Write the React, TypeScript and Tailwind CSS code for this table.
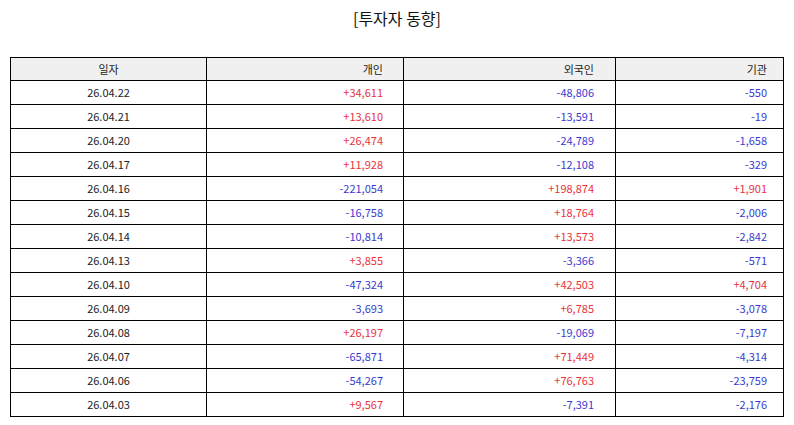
import React from "react";

const rows: [string, string, string, string][] = [
  ["26.04.22", "+34,611", "-48,806", "-550"],
  ["26.04.21", "+13,610", "-13,591", "-19"],
  ["26.04.20", "+26,474", "-24,789", "-1,658"],
  ["26.04.17", "+11,928", "-12,108", "-329"],
  ["26.04.16", "-221,054", "+198,874", "+1,901"],
  ["26.04.15", "-16,758", "+18,764", "-2,006"],
  ["26.04.14", "-10,814", "+13,573", "-2,842"],
  ["26.04.13", "+3,855", "-3,366", "-571"],
  ["26.04.10", "-47,324", "+42,503", "+4,704"],
  ["26.04.09", "-3,693", "+6,785", "-3,078"],
  ["26.04.08", "+26,197", "-19,069", "-7,197"],
  ["26.04.07", "-65,871", "+71,449", "-4,314"],
  ["26.04.06", "-54,267", "+76,763", "-23,759"],
  ["26.04.03", "+9,567", "-7,391", "-2,176"],
];

function color(v: string) {
  return v.startsWith("+") ? "text-[#e8323c]" : "text-[#3a3ad0]";
}

export default function App() {
  return (
    <div
      className="w-[794px] h-[425px] bg-white text-[#222]"
      style={{ fontFamily: '"Noto Sans CJK KR", "Noto Sans", sans-serif' }}
    >
      <div className="h-[57px] pt-[5px] text-center text-[16px] leading-[26px] text-[#111]">
        [투자자 동향]
      </div>
      <table className="ml-[10px] w-[773px] border-collapse table-fixed text-[11px] leading-none">
        <colgroup>
          <col className="w-[196px]" />
          <col className="w-[197px]" />
          <col className="w-[212px]" />
          <col className="w-[168px]" />
        </colgroup>
        <thead>
          <tr className="h-[23px] bg-[#f0f0f0]">
            <th className="border-[1.5px] border-black font-normal text-center">일자</th>
            <th className="border-[1.5px] border-black font-normal text-right pr-[20px]">개인</th>
            <th className="border-[1.5px] border-black font-normal text-right pr-[21px]">외국인</th>
            <th className="border-[1.5px] border-black font-normal text-right pr-[16px]">기관</th>
          </tr>
        </thead>
        <tbody>
          {rows.map((r) => (
            <tr key={r[0]} className="h-[24px]">
              <td className="border-[1.5px] border-black text-center">{r[0]}</td>
              <td className={`border-[1.5px] border-black text-right pr-[20px] ${color(r[1])}`}>{r[1]}</td>
              <td className={`border-[1.5px] border-black text-right pr-[21px] ${color(r[2])}`}>{r[2]}</td>
              <td className={`border-[1.5px] border-black text-right pr-[16px] ${color(r[3])}`}>{r[3]}</td>
            </tr>
          ))}
        </tbody>
      </table>
    </div>
  );
}
